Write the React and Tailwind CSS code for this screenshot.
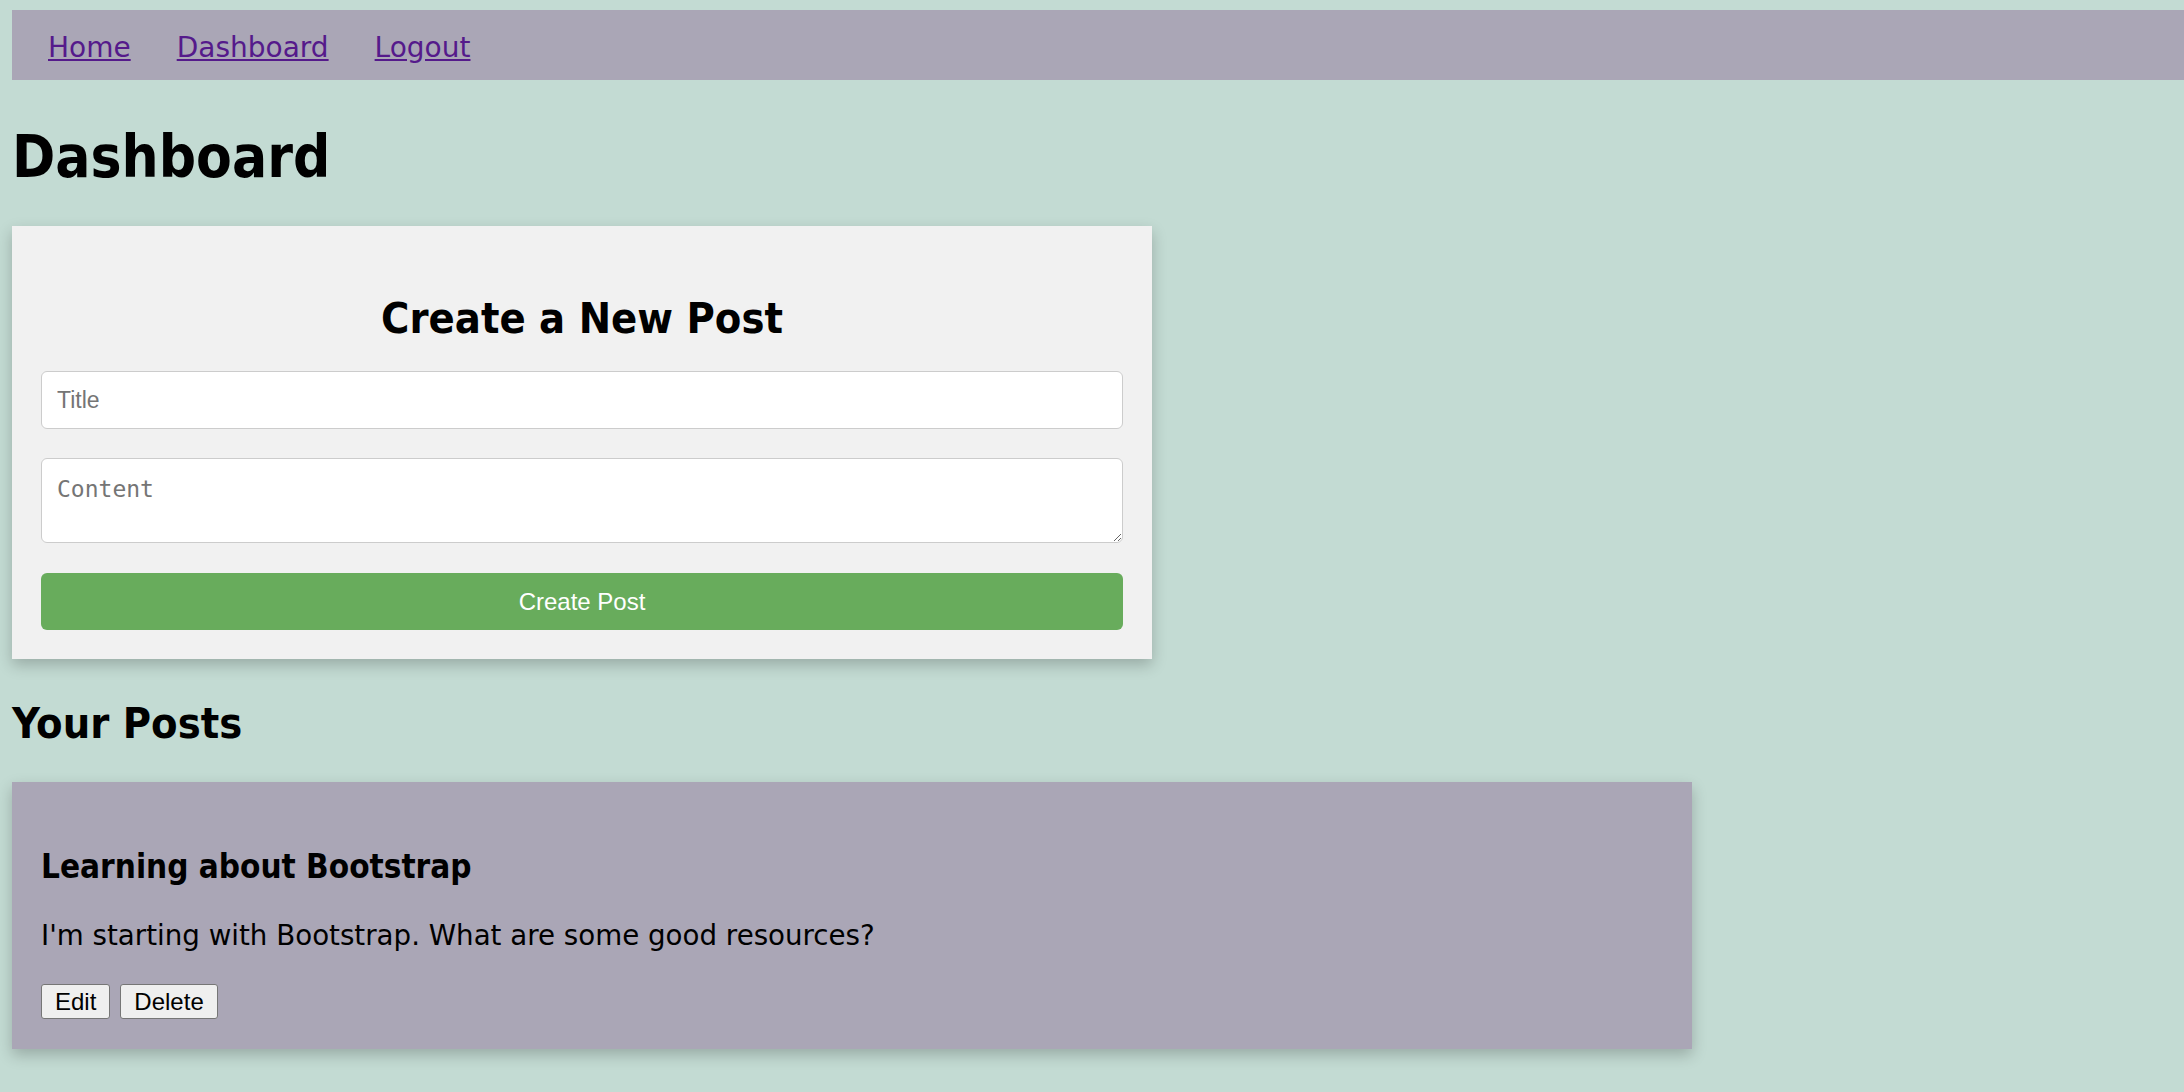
export default function App() {
  const heading = "font-['DejaVu_Sans_Condensed','DejaVu_Sans',sans-serif] font-bold text-black";
  const smallBtn =
    "h-[35px] rounded-[3px] border border-[#767676] bg-[#efefef] px-[13px] font-['Liberation_Sans',Arial,sans-serif] text-[24px] leading-none text-black";
  return (
    <div className="min-h-screen w-full bg-[#c3dbd3] pl-[12px] pt-[10px] pb-[20px] font-['DejaVu_Sans',sans-serif] text-black">
      <nav className="flex h-[70px] items-center gap-[46px] bg-[#aaa6b6] pl-[36px] pt-[5px] text-[28px]">
        <a href="#" className="text-[#551a8b] underline">Home</a>
        <a href="#" className="text-[#551a8b] underline">Dashboard</a>
        <a href="#" className="text-[#551a8b] underline">Logout</a>
      </nav>

      <h1 className={`mt-[42px] text-[58px] leading-[70px] ${heading}`}>Dashboard</h1>

      <section className="mt-[34px] w-[1140px] bg-[#f1f1f1] p-[29px] shadow-[0_6px_14px_rgba(0,0,0,0.22)]">
        <h2 className={`mt-[37px] mb-[27px] text-center text-[43px] leading-[52px] ${heading}`}>Create a New Post</h2>
        <input
          type="text"
          placeholder="Title"
          className="block h-[58px] w-full rounded-[6px] border border-[#cccccc] bg-white px-[15px] font-['Liberation_Sans',Arial,sans-serif] text-[23px] text-black outline-none placeholder:text-[#757575]"
        />
        <textarea
          placeholder="Content"
          className="mt-[29px] block h-[85px] w-full rounded-[6px] border border-[#cccccc] bg-white px-[15px] pt-[13px] font-['DejaVu_Sans_Mono',monospace] text-[23px] text-black outline-none placeholder:text-[#757575]"
        />
        <button
          type="button"
          className="mt-[30px] block h-[57px] w-full rounded-[6px] bg-[#68ac5c] font-['Liberation_Sans',Arial,sans-serif] text-[24px] text-white"
        >
          Create Post
        </button>
      </section>

      <h2 className={`mt-[38px] text-[43px] leading-[52px] ${heading}`}>Your Posts</h2>

      <section className="mt-[33px] w-[1680px] bg-[#aaa6b6] px-[29px] pt-[29px] pb-[30px] shadow-[0_6px_14px_rgba(0,0,0,0.22)]">
        <h3 className={`mt-[36px] text-[33px] leading-[40px] ${heading}`}>Learning about Bootstrap</h3>
        <p className="mt-[32px] text-[27.7px] leading-[34px]">I'm starting with Bootstrap. What are some good resources?</p>
        <div className="mt-[31px] flex gap-[10px]">
          <button type="button" className={smallBtn}>
            Edit
          </button>
          <button type="button" className={smallBtn}>
            Delete
          </button>
        </div>
      </section>
    </div>
  );
}
